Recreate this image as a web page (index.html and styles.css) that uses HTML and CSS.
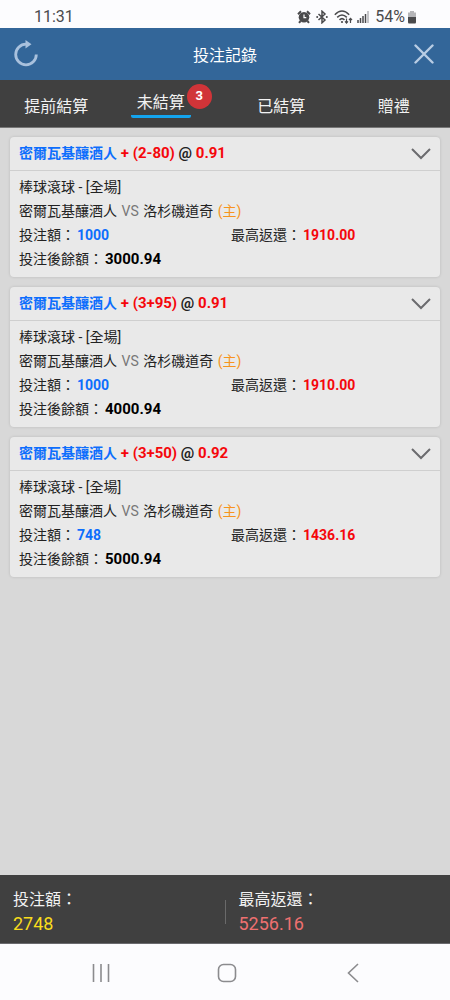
FILE: index.html
```html
<!DOCTYPE html>
<html lang="zh-TW">
<head>
    <meta charset="UTF-8">
    <meta name="viewport" content="width=device-width, initial-scale=1.0">
    <title>投注記錄</title>
    <link rel="stylesheet" href="styles.css">
</head>
<body>
    <div class="status-bar">
        <span class="clock">11:31</span>
        <div class="status-icons">
            <svg width="14" height="14" viewBox="0 0 14 14">
                <circle cx="7" cy="7.3" r="5.3" fill="#4a4a4c"/>
                <path d="M1 4.2 L4 1.3 M13 4.2 L10 1.3 M3.6 11 L2 12.8 M10.4 11 L12 12.8" stroke="#4a4a4c" stroke-width="2" fill="none"/>
                <path d="M7 4.5 V7.6 H9.3" stroke="#fff" stroke-width="1.2" fill="none"/>
            </svg>
            <svg class="bluetooth" width="12" height="14" viewBox="0 0 12 14">
                <path d="M2.5 4 L9 10 L6 12.8 V1.2 L9 4 L2.5 10" stroke="#4a4a4c" stroke-width="1.5" fill="none"/>
                <circle cx="1.2" cy="7" r="1" fill="#4a4a4c"/>
                <circle cx="10.8" cy="7" r="1" fill="#4a4a4c"/>
            </svg>
            <svg class="wifi" width="19" height="14" viewBox="0 0 19 14">
                <path d="M0.8 4.8 Q8 -2.6 15.2 4.8 M3.2 7.4 Q8 2.6 12.8 7.4 M5.5 9.9 Q8 7.4 10.5 9.9" stroke="#4a4a4c" stroke-width="1.5" fill="none"/>
                <circle cx="8" cy="12" r="1.1" fill="#4a4a4c"/>
                <path d="M12.5 8.5 V13 M11 11.3 L12.5 13 L14 11.3 M16.5 13 V8.5 M15 10 L16.5 8.3 L18 10" stroke="#4a4a4c" stroke-width="1.2" fill="none"/>
            </svg>
            <svg class="signal" width="12" height="12" viewBox="0 0 12 12">
                <path d="M1 9 V12 M3.5 7 V12 M6 5 V12 M8.5 3 V12" stroke="#4a4a4c" stroke-width="1.5"/>
                <path d="M11 0 V12" stroke="#b5b5b8" stroke-width="1.5"/>
            </svg>
            <span class="percent">54%</span>
            <svg class="battery" width="10" height="13" viewBox="0 0 10 13">
                <path d="M3 0 H7 V1.5 H9 V6 H1 V1.5 H3 Z" fill="#b5b5b8"/>
                <path d="M1 6 H9 V11 Q9 12.5 8 12.5 H2 Q1 12.5 1 11 Z" fill="#4a4a4c"/>
            </svg>
        </div>
    </div>

    <header class="title-bar">
        <button class="icon-button" type="button" aria-label="重新整理">
            <svg width="26" height="28" viewBox="0 0 26 28">
                <path d="M23.3 14.5 A10.3 10.3 0 1 1 13 4.2 H14" stroke="#a9c1dd" stroke-width="2.8" fill="none"/>
                <path d="M12.5 0 L18.5 4.2 L12.5 8.5 Z" fill="#a9c1dd"/>
            </svg>
        </button>
        <h1>投注記錄</h1>
        <button class="icon-button" type="button" aria-label="關閉">
            <svg width="20" height="20" viewBox="0 0 20 20">
                <path d="M1.5 1.5 L18.5 18.5 M18.5 1.5 L1.5 18.5" stroke="#b9cde4" stroke-width="2.4" stroke-linecap="round"/>
            </svg>
        </button>
    </header>

    <nav class="tabs">
        <a href="#early">提前結算</a>
        <a class="active" href="#open"><span class="tab-label">未結算<span class="badge">3</span></span></a>
        <a href="#settled">已結算</a>
        <a href="#bonus">贈禮</a>
    </nav>

    <main class="bets">
        <article class="bet">
            <header class="bet-header">
                <h2><span class="team">密爾瓦基釀酒人</span> <span class="red">+ (2-80)</span> @ <span class="red">0.91</span></h2>
                <button class="toggle" type="button" aria-label="展開">
                    <svg width="20" height="12" viewBox="0 0 20 12"><path d="M1 1 L10 10 L19 1" stroke="#6b6b6e" stroke-width="2" fill="none"/></svg>
                </button>
            </header>
            <div class="bet-body">
                <p>棒球滾球 - [全場]</p>
                <p>密爾瓦基釀酒人 <span class="vs">VS</span> 洛杉磯道奇 <span class="home">(主)</span></p>
                <div class="amounts">
                    <p>投注額：<b class="stake">1000</b></p>
                    <p>最高返還：<b class="red">1910.00</b></p>
                </div>
                <p>投注後餘額：<b class="balance">3000.94</b></p>
            </div>
        </article>

        <article class="bet">
            <header class="bet-header">
                <h2><span class="team">密爾瓦基釀酒人</span> <span class="red">+ (3+95)</span> @ <span class="red">0.91</span></h2>
                <button class="toggle" type="button" aria-label="展開">
                    <svg width="20" height="12" viewBox="0 0 20 12"><path d="M1 1 L10 10 L19 1" stroke="#6b6b6e" stroke-width="2" fill="none"/></svg>
                </button>
            </header>
            <div class="bet-body">
                <p>棒球滾球 - [全場]</p>
                <p>密爾瓦基釀酒人 <span class="vs">VS</span> 洛杉磯道奇 <span class="home">(主)</span></p>
                <div class="amounts">
                    <p>投注額：<b class="stake">1000</b></p>
                    <p>最高返還：<b class="red">1910.00</b></p>
                </div>
                <p>投注後餘額：<b class="balance">4000.94</b></p>
            </div>
        </article>

        <article class="bet">
            <header class="bet-header">
                <h2><span class="team">密爾瓦基釀酒人</span> <span class="red">+ (3+50)</span> @ <span class="red">0.92</span></h2>
                <button class="toggle" type="button" aria-label="展開">
                    <svg width="20" height="12" viewBox="0 0 20 12"><path d="M1 1 L10 10 L19 1" stroke="#6b6b6e" stroke-width="2" fill="none"/></svg>
                </button>
            </header>
            <div class="bet-body">
                <p>棒球滾球 - [全場]</p>
                <p>密爾瓦基釀酒人 <span class="vs">VS</span> 洛杉磯道奇 <span class="home">(主)</span></p>
                <div class="amounts">
                    <p>投注額：<b class="stake">748</b></p>
                    <p>最高返還：<b class="red">1436.16</b></p>
                </div>
                <p>投注後餘額：<b class="balance">5000.94</b></p>
            </div>
        </article>
    </main>

    <footer class="totals">
        <div class="total">
            <p>投注額：</p>
            <p class="total-stake">2748</p>
        </div>
        <div class="divider"></div>
        <div class="total">
            <p>最高返還：</p>
            <p class="total-return">5256.16</p>
        </div>
    </footer>

    <div class="nav-bar">
        <button type="button" aria-label="最近">
            <svg width="20" height="20" viewBox="0 0 20 20"><path d="M2.5 1 V19 M10 1 V19 M17.5 1 V19" stroke="#8b8b8e" stroke-width="1.6"/></svg>
        </button>
        <button type="button" aria-label="主頁">
            <svg width="20" height="20" viewBox="0 0 20 20"><rect x="1.5" y="1.5" width="17" height="17" rx="5" stroke="#8b8b8e" stroke-width="1.6" fill="none"/></svg>
        </button>
        <button type="button" aria-label="返回">
            <svg width="20" height="20" viewBox="0 0 20 20"><path d="M15 1 L5.5 10 L15 19" stroke="#8b8b8e" stroke-width="1.6" fill="none"/></svg>
        </button>
    </div>
</body>
</html>
```
FILE: styles.css
```css
* {
    box-sizing: border-box;
}
body {
    margin: 0;
    min-height: 100vh;
    display: flex;
    flex-direction: column;
    background-color: #d8d8d8;
    font-family: Roboto, "Noto Sans CJK TC", sans-serif;
    font-size: 14px;
    color: #222;
}
h1, h2, p {
    margin: 0;
}
button {
    display: flex;
    align-items: center;
    justify-content: center;
    padding: 0;
    border: none;
    background: none;
    cursor: pointer;
}
a {
    color: inherit;
    text-decoration: none;
}
.status-bar {
    display: flex;
    justify-content: space-between;
    height: 28px;
    padding: 6px 33px 0 34px;
    background-color: #fcfcfe;
    color: #4a4a4c;
    font-size: 16px;
    line-height: 22px;
}
.status-icons {
    display: flex;
    align-items: center;
}
.bluetooth {
    margin-left: 5px;
}
.wifi {
    margin-left: 6px;
}
.signal {
    margin-left: 4px;
}
.percent {
    margin-left: 6px;
}
.battery {
    margin-left: 2px;
}
.title-bar {
    display: flex;
    align-items: center;
    justify-content: space-between;
    height: 52px;
    padding: 0 13px;
    background-color: #336699;
    color: #fff;
}
.title-bar h1 {
    font-size: 16px;
    font-weight: 400;
}
.icon-button {
    width: 26px;
    height: 36px;
}
.tabs {
    display: grid;
    grid-template-columns: repeat(4, 1fr);
    height: 48px;
    border-bottom: 1px solid #777;
    background-color: #404040;
    color: #f2f2f2;
    font-size: 16px;
}
.tabs a {
    display: flex;
    align-items: center;
    justify-content: center;
    padding-top: 2px;
}
.tabs .active {
    align-items: flex-start;
    padding: 11px 16px 0 0;
}
.tab-label {
    position: relative;
    padding: 0 6px;
    border-bottom: 3px solid #14a4ee;
    border-radius: 2px;
    line-height: 24px;
}
.badge {
    position: absolute;
    top: -7px;
    right: -21px;
    width: 25px;
    height: 25px;
    border-radius: 50%;
    background-color: #d13438;
    color: #fff;
    font-size: 13px;
    font-weight: 700;
    line-height: 23px;
    text-align: center;
}
.bets {
    flex: 1;
    display: flex;
    flex-direction: column;
    gap: 10px;
    padding: 9px 10px;
}
.bet {
    border-radius: 4px;
    background-color: #e9e9e9;
    box-shadow: 0 0 3px rgba(0, 0, 0, 0.15);
}
.bet-header {
    display: flex;
    align-items: center;
    justify-content: space-between;
    height: 34px;
    padding: 0 9px;
    border-bottom: 1px solid #cfcfcf;
}
.bet-header h2 {
    padding-bottom: 3px;
    font-size: 15px;
    font-weight: 700;
}
.team {
    font-size: 14px;
}
.team, .stake {
    color: #0d6efd;
}
.red {
    color: #f5070b;
}
.bet-body {
    padding: 4px 9px 6px;
    line-height: 24px;
}
.bet-body b {
    margin-left: 2px;
}
.amounts {
    display: grid;
    grid-template-columns: 1fr 1fr;
    column-gap: 12px;
}
.vs {
    margin: 0 1px;
    color: #777;
}
.home {
    margin-left: 1px;
    color: #f7941d;
}
.balance {
    color: #000;
    font-size: 15px;
}
.totals {
    display: grid;
    grid-template-columns: 1fr 1px 1fr;
    align-items: center;
    height: 69px;
    padding-top: 5px;
    border-bottom: 1px solid #6a6a6e;
    background-color: #404040;
    color: #f2f2f2;
    font-size: 16px;
    line-height: 24px;
}
.total {
    padding: 0 13px;
}
.divider {
    height: 24px;
    background-color: #6a6a6a;
}
.total-stake {
    color: #f8dc1c;
    font-size: 18px;
}
.total-return {
    color: #ee7070;
    font-size: 18px;
}
.nav-bar {
    display: flex;
    align-items: center;
    justify-content: space-between;
    height: 56px;
    padding: 2px 87px 0 91px;
    background-color: #fcfcfe;
}
```
